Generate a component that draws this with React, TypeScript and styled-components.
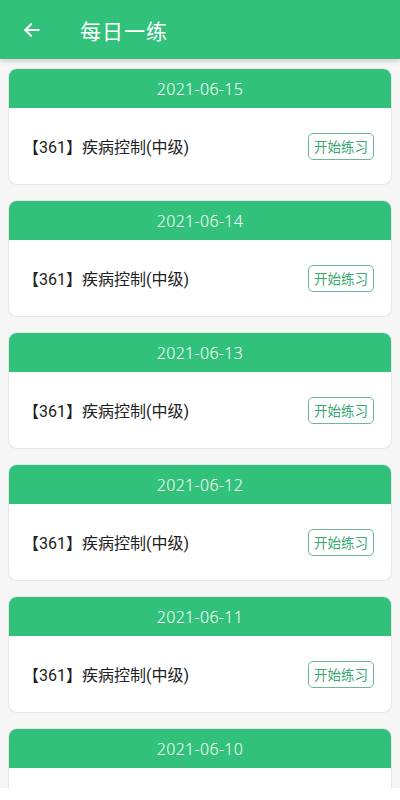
import styled, { createGlobalStyle } from 'styled-components'

const GREEN = '#31c17a'

const Global = createGlobalStyle`
  html, body {
    margin: 0;
    padding: 0;
    background: #ffffff;
    font-family: 'Noto Sans', 'Noto Sans CJK SC', sans-serif;
  }
`

const Screen = styled.div`
  display: flex;
  flex-direction: column;
  height: 800px;
  overflow: hidden;
`

const Page = styled.div`
  background: #f6f6f6;
  flex: 0 0 788px;
  overflow: hidden;
`

const Footer = styled.div`
  background: #ffffff;
  flex: 1;
`

const Header = styled.div`
  align-items: center;
  background: ${GREEN};
  box-shadow: 0 2px 5px rgba(0, 0, 0, 0.18);
  display: flex;
  height: 59px;
  position: relative;
  z-index: 1;
`

const Back = styled.div`
  align-items: center;
  display: flex;
  height: 59px;
  justify-content: center;
  padding-left: 20px;
  width: 24px;
`

const Title = styled.div`
  color: #ffffff;
  font-family: 'Noto Sans CJK SC', sans-serif;
  font-size: 21px;
  letter-spacing: 1px;
  margin-left: 36px;
  margin-top: 1px;
`

const List = styled.div`
  display: flex;
  flex-direction: column;
  gap: 17px;
  padding: 10px 9px 0 9px;
`

const Card = styled.div`
  background: #ffffff;
  border-radius: 8px;
  box-shadow: 0 0 0 1px #e6e6e6;
  overflow: hidden;
`

const DateBar = styled.div`
  align-items: center;
  background: ${GREEN};
  color: #ffffff;
  display: flex;
  font-family: 'Noto Sans', sans-serif;
  font-size: 16px;
  font-weight: 300;
  height: 39px;
  justify-content: center;
  letter-spacing: 0.3px;
`

const Body = styled.div`
  align-items: center;
  display: flex;
  height: 76px;
  justify-content: space-between;
  padding: 0 17px 0 14px;
`

const Name = styled.div`
  color: #222222;
  font-family: Roboto, 'Noto Sans CJK SC', sans-serif;
  font-size: 16px;
`

const Start = styled.div`
  align-items: center;
  border: 1.5px solid #6bb895;
  border-radius: 5px;
  box-sizing: border-box;
  color: #3aa870;
  display: flex;
  font-family: 'Noto Sans CJK SC', sans-serif;
  font-size: 13.5px;
  height: 27px;
  justify-content: center;
  width: 66px;
`

const DATES = ['2021-06-15', '2021-06-14', '2021-06-13', '2021-06-12', '2021-06-11', '2021-06-10']

export default function App() {
  return (
    <Screen>
      <Global />
      <Page>
        <Header>
          <Back>
            <svg width="20" height="20" viewBox="0 0 24 24" fill="none" stroke="#fff" strokeWidth="2.4" strokeLinecap="round" strokeLinejoin="round">
              <path d="M20 12H4" />
              <path d="M11 5l-7 7 7 7" />
            </svg>
          </Back>
          <Title>每日一练</Title>
        </Header>
        <List>
          {DATES.map(d => (
            <Card key={d}>
              <DateBar>{d}</DateBar>
              <Body>
                <Name>【361】疾病控制(中级)</Name>
                <Start>开始练习</Start>
              </Body>
            </Card>
          ))}
        </List>
      </Page>
      <Footer />
    </Screen>
  )
}
